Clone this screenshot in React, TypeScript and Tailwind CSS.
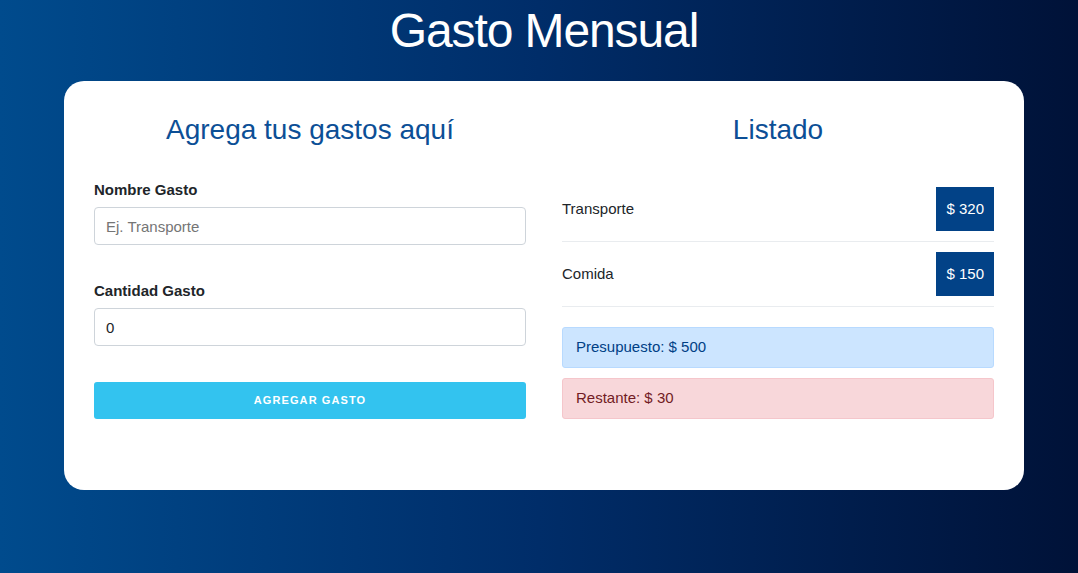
import React from "react";

export default function App() {
  const items = [
    { name: "Transporte", amount: 320 },
    { name: "Comida", amount: 150 },
  ];
  return (
    <div
      className="min-h-[573px] w-full bg-gradient-to-r from-[#004b8d] via-[#002d69] to-[#001238] pl-[10px] text-[#212529]"
      style={{ fontFamily: '"Liberation Sans", Arial, sans-serif' }}
    >
      <h1 className="m-0 h-[81px] pt-[7px] text-center text-[48px] font-normal leading-none tracking-[-1.1px] text-white">
        Gasto Mensual
      </h1>
      <div className="mx-auto w-[960px] rounded-[20px] bg-white px-[30px] pb-[71px] pt-[35px]">
        <div className="grid grid-cols-2 gap-[36px]">
          {/* Left column */}
          <div className="flex flex-col">
            <h2 className="m-0 text-center text-[28px] font-normal leading-none text-[#0c4f96]">
              Agrega tus gastos aquí
            </h2>
            <label className="mt-[38px] block text-[15px] font-bold leading-none">Nombre Gasto</label>
            <input
              className="mt-[10px] h-[38px] w-full rounded-[4px] border border-[#ced4da] px-[11px] text-[15px] text-[#495057] placeholder:text-[#757575] outline-none"
              placeholder="Ej. Transporte"
              style={{ fontFamily: '"Liberation Sans", Arial, sans-serif' }}
            />
            <label className="mt-[38px] block text-[15px] font-bold leading-none">Cantidad Gasto</label>
            <input
              className="mt-[10px] h-[38px] w-full rounded-[4px] border border-[#ced4da] px-[11px] text-[15px] text-[#212529] outline-none"
              defaultValue="0"
              style={{ fontFamily: '"Liberation Sans", Arial, sans-serif' }}
            />
            <button
              className="mt-[36px] h-[37px] w-full rounded-[3px] bg-[#33c3ef] text-[11px] font-bold uppercase tracking-[1.1px] text-white"
              style={{ fontFamily: '"Liberation Sans", Arial, sans-serif' }}
            >
              Agregar Gasto
            </button>
          </div>
          {/* Right column */}
          <div className="flex flex-col">
            <h2 className="m-0 text-center text-[28px] font-normal leading-none text-[#0c4f96]">
              Listado
            </h2>
            <ul className="mt-[33px]">
              {items.map((it) => (
                <li
                  key={it.name}
                  className="flex h-[65px] items-center justify-between border-b border-[#e9ecef] text-[15px]"
                >
                  <span>{it.name}</span>
                  <span className="flex h-[44px] items-center bg-[#024287] px-[10px] text-[15px] text-white">
                    $ {it.amount}
                  </span>
                </li>
              ))}
            </ul>
            <div className="mt-[20px] flex h-[41px] items-center rounded-[3px] border border-[#b8daff] bg-[#cce5ff] px-[13px] text-[15px] text-[#004085]">
              Presupuesto: $ 500
            </div>
            <div className="mt-[10px] flex h-[41px] items-center rounded-[3px] border border-[#f5c6cb] bg-[#f8d7da] px-[13px] text-[15px] text-[#721c24]">
              Restante: $ 30
            </div>
          </div>
        </div>
      </div>
    </div>
  );
}
